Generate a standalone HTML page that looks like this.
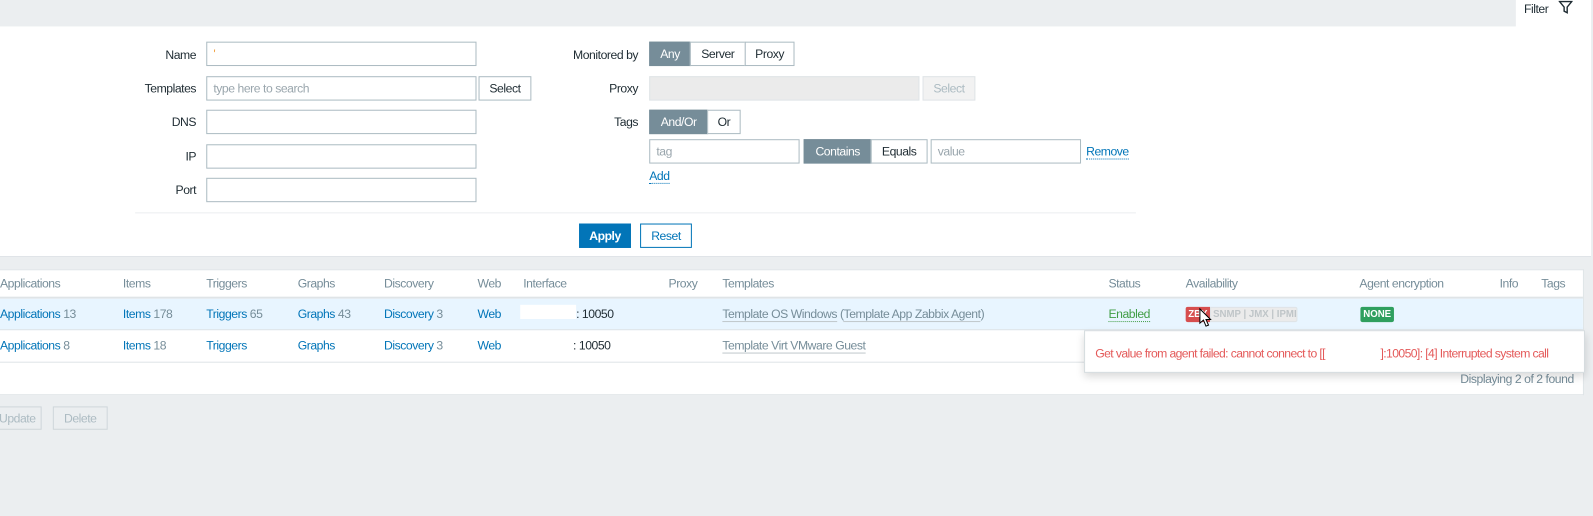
<!DOCTYPE html>
<html><head><meta charset="utf-8"><style>
*{box-sizing:border-box;margin:0;padding:0}
body{width:1593px;height:516px;background:#ebeef0;font-family:"Liberation Sans",sans-serif;font-size:12px;color:#1f2c33;position:relative;overflow:hidden;letter-spacing:-0.45px}
#w{position:absolute;left:0;top:0;width:1568px;height:508px;transform:scale(1.016);transform-origin:0 0}
.a{position:absolute;white-space:nowrap}
.lbl{position:absolute;text-align:right;width:120px;line-height:14px}
.inp{position:absolute;height:24px;border:1px solid #acbbc2;background:#fff;padding-left:6px;line-height:22px;color:#9aa6ad}
.btn{position:absolute;height:24px;border:1px solid #acbbc2;background:#fff;text-align:center;line-height:22px;color:#1f2c33}
.dk{background:#768d99;border-color:#768d99;color:#fff}
.lnk{color:#0275b8}
.dot{border-bottom:1px dotted #0275b8}
.h{color:#768d99;position:absolute;top:272px}
.r1,.r2{position:absolute}
.r1{top:302px}.r2{top:333px}
.g{color:#768d99}
</style></head><body><div id="w">
<div class="a" style="left:0;top:26px;width:1566px;height:227px;background:#fff;border-bottom:1px solid #dfe4e7"></div>
<div class="a" style="left:1492px;top:0;width:74px;height:27px;background:#fff"></div>
<div class="a" style="left:1500px;top:2px;color:#1f2c33">Filter</div>
<svg class="a" style="left:1534px;top:0" width="14" height="14" viewBox="0 0 14 14"><path d="M1 1.5H13L8.5 7V12.5L5.5 11V7Z" fill="none" stroke="#1f2c33" stroke-width="1.4"/></svg>

<div class="lbl" style="left:73px;top:47px">Name</div>
<div class="lbl" style="left:73px;top:80px">Templates</div>
<div class="lbl" style="left:73px;top:113px">DNS</div>
<div class="lbl" style="left:73px;top:147px">IP</div>
<div class="lbl" style="left:73px;top:180px">Port</div>
<div class="inp" style="left:203px;top:41px;width:266px"><span style="color:#f0a040">'</span></div>
<div class="inp" style="left:203px;top:75px;width:266px">type here to search</div>
<div class="btn" style="left:471px;top:75px;width:52px">Select</div>
<div class="inp" style="left:203px;top:108px;width:266px"></div>
<div class="inp" style="left:203px;top:142px;width:266px"></div>
<div class="inp" style="left:203px;top:175px;width:266px"></div>

<div class="lbl" style="left:508px;top:47px">Monitored by</div>
<div class="btn dk" style="left:639px;top:41px;width:41px">Any</div>
<div class="btn" style="left:679px;top:41px;width:55px">Server</div>
<div class="btn" style="left:733px;top:41px;width:49px">Proxy</div>
<div class="lbl" style="left:508px;top:80px">Proxy</div>
<div class="inp" style="left:639px;top:75px;width:266px;background:#ebebeb;border-color:#dfe4e7"></div>
<div class="btn" style="left:908px;top:75px;width:52px;background:#f2f2f2;border-color:#dfe4e7;color:#acbbc2">Select</div>
<div class="lbl" style="left:508px;top:113px">Tags</div>
<div class="btn dk" style="left:639px;top:108px;width:58px">And/Or</div>
<div class="btn" style="left:696px;top:108px;width:33px">Or</div>
<div class="inp" style="left:639px;top:137px;width:148px">tag</div>
<div class="btn dk" style="left:791px;top:137px;width:67px">Contains</div>
<div class="btn" style="left:857px;top:137px;width:56px">Equals</div>
<div class="inp" style="left:916px;top:137px;width:148px">value</div>
<div class="a lnk dot" style="left:1069px;top:142px">Remove</div>
<div class="a lnk dot" style="left:639px;top:166px">Add</div>
<div class="a" style="left:133px;top:209px;width:985px;height:1px;background:#ebeef0"></div>
<div class="btn" style="left:570px;top:220px;width:51px;background:#0275b8;border-color:#0275b8;color:#fff;font-weight:bold">Apply</div>
<div class="btn" style="left:630px;top:220px;width:51px;border-color:#0275b8;color:#0275b8">Reset</div>

<div class="a" style="left:0;top:265px;width:1559px;height:124px;background:#fff;border:1px solid #dfe4e7;border-left:none"></div>
<div class="a" style="left:0;top:292px;width:1558px;height:2px;background:#dfe4e7"></div>
<div class="a" style="left:0;top:294px;width:1558px;height:31px;background:#e8f5ff;border-bottom:1px solid #dfe4e7"></div>
<div class="a" style="left:0;top:356px;width:1558px;height:1px;background:#dfe4e7"></div>
<div class="h" style="left:0">Applications</div><div class="h" style="left:121px">Items</div><div class="h" style="left:203px">Triggers</div><div class="h" style="left:293px">Graphs</div><div class="h" style="left:378px">Discovery</div><div class="h" style="left:470px">Web</div><div class="h" style="left:515px">Interface</div><div class="h" style="left:658px">Proxy</div><div class="h" style="left:711px">Templates</div><div class="h lnk" style="left:1091px">Status</div><div class="h" style="left:1167px">Availability</div><div class="h" style="left:1338px">Agent encryption</div><div class="h" style="left:1476px">Info</div><div class="h" style="left:1517px">Tags</div>

<div class="r1 lnk" style="left:0">Applications <span class="g">13</span></div>
<div class="r1 lnk" style="left:121px">Items <span class="g">178</span></div>
<div class="r1 lnk" style="left:203px">Triggers <span class="g">65</span></div>
<div class="r1 lnk" style="left:293px">Graphs <span class="g">43</span></div>
<div class="r1 lnk" style="left:378px">Discovery <span class="g">3</span></div>
<div class="r1 lnk" style="left:470px">Web</div>
<div class="a" style="left:512px;top:300px;width:55px;height:14px;background:#fff"></div>
<div class="r1" style="left:567px">: 10050</div>
<div class="r1" style="left:711px;color:#768d99"><span style="border-bottom:1px solid #c0c8cc">Template OS Windows</span> (<span style="border-bottom:1px solid #c0c8cc">Template App Zabbix Agent</span>)</div>
<div class="r1" style="left:1091px;color:#429e47;border-bottom:1px dotted #429e47">Enabled</div>
<div class="a" style="left:1167px;top:302px;width:110px;height:15px;font-size:9.5px;line-height:15px;font-weight:bold;letter-spacing:0">
<span style="display:inline-block;width:24px;background:#d64e4e;color:#fff;text-align:center;border-radius:2px 0 0 2px">ZBX</span><span style="display:inline-block;width:86px;background:#ebebeb;color:#bfc5c8;border:1px solid #dfe4e7;height:15px;line-height:13px;vertical-align:top;padding-left:2px;border-radius:0 2px 2px 0">SNMP | JMX | IPMI</span></div>
<svg class="a" style="left:1180px;top:303px" width="14" height="20" viewBox="0 0 14 20"><path d="M1 1V15L4.5 12L7 18L9.5 17L7 11.5H11.5Z" fill="#fff" stroke="#000" stroke-width="1"/></svg>
<div class="a" style="left:1339px;top:302px;width:33px;height:15px;background:#2f9f5e;color:#fff;font-size:9.5px;font-weight:bold;text-align:center;line-height:15px;border-radius:2px;letter-spacing:0">NONE</div>

<div class="r2 lnk" style="left:0">Applications <span class="g">8</span></div>
<div class="r2 lnk" style="left:121px">Items <span class="g">18</span></div>
<div class="r2 lnk" style="left:203px">Triggers</div>
<div class="r2 lnk" style="left:293px">Graphs</div>
<div class="r2 lnk" style="left:378px">Discovery <span class="g">3</span></div>
<div class="r2 lnk" style="left:470px">Web</div>
<div class="r2" style="left:564px">: 10050</div>
<div class="r2" style="left:711px;color:#768d99;border-bottom:1px solid #c0c8cc">Template Virt VMware Guest</div>
<div class="a" style="left:1349px;top:366px;width:200px;text-align:right;color:#768d99">Displaying 2 of 2 found</div>

<div class="a" style="left:1067px;top:325px;width:493px;height:42px;background:#fff;border:1px solid #d4dbde;box-shadow:0 4px 8px rgba(0,0,0,0.15)"></div>
<div class="a" style="left:1078px;top:341px;color:#e45959;letter-spacing:-0.6px">Get value from agent failed: cannot connect to [[&nbsp;&nbsp;&nbsp;&nbsp;&nbsp;&nbsp;&nbsp;&nbsp;&nbsp;&nbsp;&nbsp;&nbsp;&nbsp;&nbsp;&nbsp;&nbsp;&nbsp;&nbsp;&nbsp;&nbsp;]:10050]: [4] Interrupted system call</div>

<div class="btn" style="left:-10px;top:400px;width:51px;height:23px;background:#ebeef0;border-color:#cfd6da;color:#acbbc2;text-align:right;padding-right:5px">Update</div>
<div class="btn" style="left:52px;top:400px;width:54px;height:23px;background:#ebeef0;border-color:#cfd6da;color:#acbbc2">Delete</div>
</div></body></html>
